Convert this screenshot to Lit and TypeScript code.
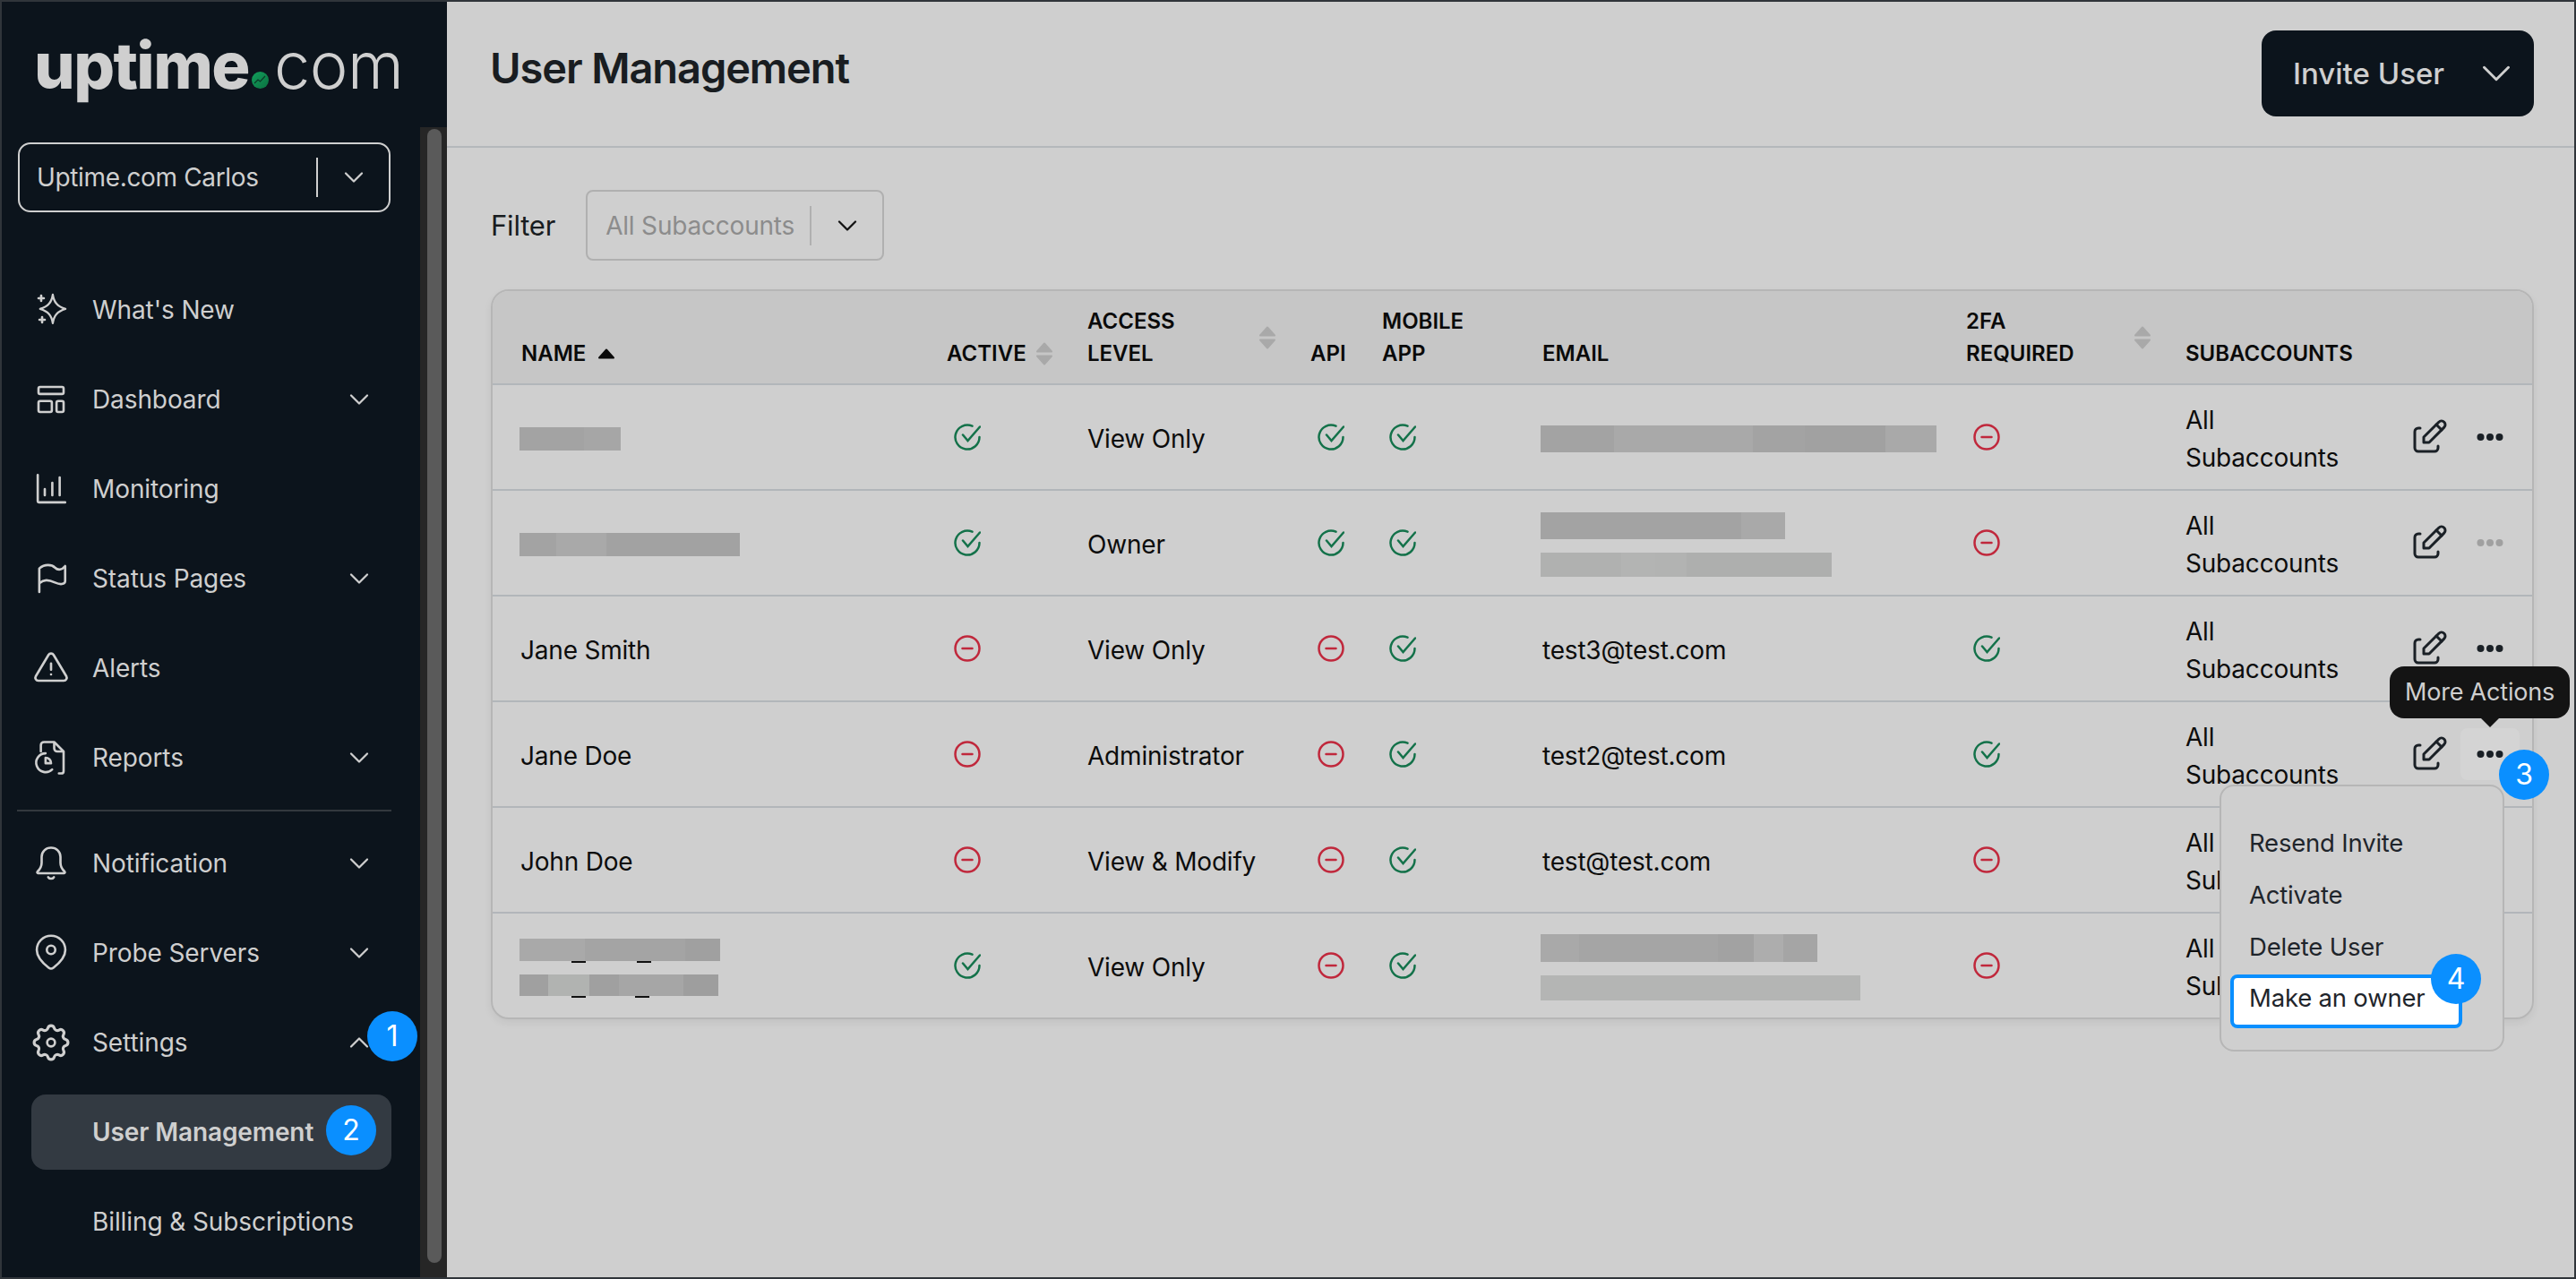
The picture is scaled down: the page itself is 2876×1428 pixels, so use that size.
// app.ts - Uptime.com user management screen with a step-by-step overlay
import { LitElement, html, css, svg } from 'lit';
import { customElement } from 'lit/decorators.js';

type Seg = [number, string];

interface Blur {
  height: number;
  segs: Seg[];
  ticks?: number[];
}

type Cell = string | Blur[];

interface UserRow {
  name: Cell;
  active: boolean;
  access: string;
  api: boolean;
  mobile: boolean;
  email: Cell;
  tfa: boolean;
  ownerLocked?: boolean;
}

const ICONS = {
  sparkle: svg`<path d="M13.3 .8c.9 5.600 3.200 8.600 9.300 10.500c-6.100 1.900-8.400 4.900-9.300 10.500c-.9-5.600-3.200-8.600-9.300-10.500c6.100-1.900 8.400-4.900 9.300-10.500z" transform="translate(1.530 1.570) scale(.87)"/><path d="M5.700 2.900v3.400M4 4.600h3.400M6.300 16.600v3.400M4.600 18.300h3.400"/>`,
  dashboard: svg`<rect x="4" y="4" width="16" height="4.500" rx="1"/><rect x="4" y="13" width="8.500" height="7" rx="1"/><rect x="15.500" y="13" width="4.500" height="7" rx="1"/>`,
  chart: svg`<path d="M3.500 3v16.500a1 1 0 0 0 1 1h16.500"/><path d="M8 12v4M12.800 8v8M17.500 4.600v11.400"/>`,
  flag: svg`<path d="M4.500 20.500V5.500c3.500-3 8-2.500 10-.5s4.500 1.500 6.500-1v9.500c0 1.500-2 3-6.500 1s-7-2-10 .5"/>`,
  alert: svg`<path d="M12 9v4"/><path d="M10.363 3.591l-8.106 13.534a1.914 1.914 0 0 0 1.636 2.871h16.214a1.914 1.914 0 0 0 1.636 -2.870l-8.106 -13.536a1.914 1.914 0 0 0 -3.274 0z"/><path d="M12 16h.01"/>`,
  report: svg`<path d="M5.500 8V4a2 2 0 0 1 2-2h6.500l6 6v12.500a1.500 1.500 0 0 1-1.500 1.500h-1.500"/><path d="M14 2.500v3.500a2 2 0 0 0 2 2h3.500"/><path d="M8.500 9.200a6 6 0 1 0 4.200 10.300"/><path d="M8.500 12v3.500h3.500a3.500 3.500 0 0 0-3.500-3.500z"/>`,
  bell: svg`<path d="M12 2a5.800 5.800 0 0 0-6 5.800v3.700c0 2.200-.9 4-2.700 5.800a.6.6 0 0 0 .4 1h16.600a.6.6 0 0 0 .4-1c-1.800-1.800-2.700-3.600-2.700-5.800V7.800a5.800 5.800 0 0 0-6-5.800z"/><path d="M10.200 20.800a2.200 2.200 0 0 0 3.600 0"/>`,
  pin: svg`<circle cx="12" cy="10" r="2.700"/><path d="M12 1a9.100 9.100 0 0 0-9.100 9.100c0 4.500 4 8.500 7.600 11.300a2.400 2.400 0 0 0 3 0c3.600-2.800 7.600-6.800 7.600-11.300a9.100 9.100 0 0 0-9.100-9.100z"/>`,
  gear: svg`<path d="M10.325 4.317c.426 -1.756 2.924 -1.756 3.350 0a1.724 1.724 0 0 0 2.573 1.066c1.543 -.94 3.310 .826 2.370 2.370a1.724 1.724 0 0 0 1.065 2.572c1.756 .426 1.756 2.924 0 3.350a1.724 1.724 0 0 0 -1.066 2.573c.94 1.543 -.826 3.310 -2.370 2.370a1.724 1.724 0 0 0 -2.572 1.065c-.426 1.756 -2.924 1.756 -3.350 0a1.724 1.724 0 0 0 -2.573 -1.066c-1.543 .94 -3.310 -.826 -2.370 -2.370a1.724 1.724 0 0 0 -1.065 -2.572c-1.756 -.426 -1.756 -2.924 0 -3.350a1.724 1.724 0 0 0 1.066 -2.573c-.94 -1.543 .826 -3.310 2.370 -2.370c1 .608 2.296 .07 2.572 -1.065z" transform="translate(-2.400 -2.400) scale(1.200)"/><circle cx="12" cy="12" r="2.500"/>`,
  edit: svg`<path d="M7 7h-1a2 2 0 0 0 -2 2v9a2 2 0 0 0 2 2h9a2 2 0 0 0 2 -2v-1"/><path d="M20.385 6.585a2.100 2.100 0 0 0 -2.970 -2.970l-8.415 8.385v3h3l8.385 -8.415z"/><path d="M16 5l3 3"/>`,
};

const icon = (body: unknown, size = 42, stroke = 1.5) => html`<svg
  class="icon"
  width=${size}
  height=${size}
  viewBox="0 0 24 24"
  fill="none"
  stroke="currentColor"
  stroke-width=${stroke}
  stroke-linecap="round"
  stroke-linejoin="round"
>${body}</svg>`;

const chevron = (up = false, size = 36, stroke = 1.5) =>
  icon(svg`<path d=${up ? 'M6 15l6-6 6 6' : 'M6 9l6 6 6-6'}/>`, size, stroke);

const yes = html`<svg class="state yes" width="30" height="30" viewBox="0 0 30 30" fill="none">
  <path d="M20.500 2.700A13.500 13.500 0 1 0 28.500 15"/>
  <path d="M10 12.500l5.500 6.500L29 3.500"/>
</svg>`;

const no = html`<svg class="state no" width="30" height="30" viewBox="0 0 30 30" fill="none">
  <circle cx="15" cy="15" r="13.500"/>
  <path d="M9.500 15h11"/>
</svg>`;

const flag = (on: boolean) => (on ? yes : no);

const sortBoth = html`<svg class="sort" width="20" height="26" viewBox="0 0 20 26">
  <path d="M10 1.500L18 10.500H2z"/>
  <path d="M2 15.500H18L10 24.500z"/>
</svg>`;

const sortUp = html`<svg class="sort-up" width="20" height="12" viewBox="0 0 20 12">
  <path d="M10 1.500L18 10.500H2z"/>
</svg>`;

const dots = html`<svg width="30" height="10" viewBox="0 0 30 10" fill="currentColor">
  <circle cx="4.500" cy="5" r="4"/>
  <circle cx="15" cy="5" r="4"/>
  <circle cx="25.500" cy="5" r="4"/>
</svg>`;

const COLS = [475, 157, 249, 80, 179, 473, 245, 242, 177];

const A = '#a3a3a3';
const B = '#a9a9a9';
const C = '#b2b3b2';

const USERS: UserRow[] = [
  {
    name: [{ height: 26, segs: [[72, A], [41, '#a6a6a6']] }],
    active: true,
    access: 'View Only',
    api: true,
    mobile: true,
    email: [{ height: 30, segs: [[82, A], [155, B], [58, A], [90, '#a1a1a1'], [57, B]] }],
    tfa: false,
  },
  {
    name: [{ height: 26, segs: [[41, A], [56, B], [149, '#a2a2a2']] }],
    active: true,
    access: 'Owner',
    api: true,
    mobile: true,
    email: [
      { height: 30, segs: [[224, A], [49, B]] },
      { height: 27, segs: [[90, '#b0b1b0'], [38, '#b3b4b3'], [35, C], [162, '#aeafae']] },
    ],
    tfa: false,
    ownerLocked: true,
  },
  { name: 'Jane Smith', active: false, access: 'View Only', api: false, mobile: true, email: 'test3@test.com', tfa: true },
  { name: 'Jane Doe', active: false, access: 'Administrator', api: false, mobile: true, email: 'test2@test.com', tfa: true },
  { name: 'John Doe', active: false, access: 'View & Modify', api: false, mobile: true, email: 'test@test.com', tfa: false },
  {
    name: [
      { height: 25, segs: [[73, B], [112, '#a4a4a4'], [39, '#a0a0a0']], ticks: [58, 131] },
      { height: 24, segs: [[32, '#a0a0a0'], [46, '#b1b3b1'], [33, '#a0a0a0'], [72, '#a6a6a6'], [39, '#9e9e9e']], ticks: [58, 129] },
    ],
    active: true,
    access: 'View Only',
    api: false,
    mobile: true,
    email: [
      { height: 31, segs: [[43, B], [155, '#a5a5a5'], [40, '#a2a2a2'], [33, '#adadad'], [38, '#a5a5a5']] },
      { height: 28, segs: [[357, '#b4b5b4']] },
    ],
    tfa: false,
  },
];

const NAV_TOP = [
  { label: "What's New", icon: ICONS.sparkle },
  { label: 'Dashboard', icon: ICONS.dashboard, more: true },
  { label: 'Monitoring', icon: ICONS.chart },
  { label: 'Status Pages', icon: ICONS.flag, more: true },
  { label: 'Alerts', icon: ICONS.alert },
  { label: 'Reports', icon: ICONS.report, more: true },
];

const NAV_BOTTOM = [
  { label: 'Notification', icon: ICONS.bell, more: true },
  { label: 'Probe Servers', icon: ICONS.pin, more: true },
];

@customElement('app-root')
export class AppRoot extends LitElement {
  static override styles = css`
    :host {
      display: block;
      width: 2876px;
      height: 1428px;
      box-sizing: border-box;
      border: 2px solid #30353a;
      overflow: hidden;
      font-family: Inter, 'Noto Sans', sans-serif;
      font-size: 28px;
      letter-spacing: -0.2px;
      color: #0c0c0c;
      background: #cfcfcf;
    }

    .app {
      display: flex;
      height: 100%;
    }

    .icon {
      display: block;
      flex: none;
    }

    /* sidebar */
    .sidebar {
      flex: none;
      width: 497px;
      display: flex;
      flex-direction: column;
      background: #0c141c;
      color: #cfcfcf;
    }

    .logo {
      flex: none;
      height: 140px;
      box-sizing: border-box;
      padding: 30px 0 0 36px;
      display: flex;
      align-items: baseline;
      font-size: 72px;
      line-height: 82px;
    }

    .logo b {
      font-weight: 800;
      letter-spacing: -1.6px;
    }

    .logo span {
      font-weight: 300;
      letter-spacing: -.5px;
    }

    .logo svg {
      margin: 0 6px 0 3px;
    }

    .side-body {
      flex: 1;
      min-height: 0;
      display: flex;
    }

    .side-scroll {
      flex: 1;
      min-width: 0;
      overflow: hidden;
      padding-top: 17px;
    }

    .track {
      flex: none;
      width: 30px;
      box-sizing: border-box;
      padding: 2px 6px 16px 8px;
      background: #262626;
    }

    .thumb {
      height: 100%;
      border-radius: 8px;
      background: #5a5a5a;
    }

    .select {
      display: flex;
      align-items: center;
      box-sizing: border-box;
      border-radius: 14px;
      padding: 0 21px 0 20px;
      border: 2px solid currentColor;
    }

    .select .value {
      flex: 1;
      white-space: nowrap;
    }

    .select .sep {
      width: 2px;
      height: 44px;
      margin-right: 22px;
      background: currentColor;
    }

    .account {
      width: 416px;
      height: 78px;
      margin-left: 18px;
      padding-left: 19px;
      letter-spacing: -0.35px;
    }

    nav {
      margin: 67px 0 0 33px;
      width: 402px;
      letter-spacing: -0.1px;
    }

    .nav-item {
      position: relative;
      height: 84px;
      margin-bottom: 16px;
      padding: 0 18px 0 1px;
      display: flex;
      align-items: center;
      white-space: nowrap;
    }

    .nav-item .label {
      flex: 1;
      margin-left: 25px;
    }

    .nav-item.sub {
      padding-left: 68px;
      border-radius: 16px;
    }

    .nav-item.sub .label {
      margin-left: 0;
    }

    .nav-item.current {
      background: #333a42;
      font-weight: 600;
    }

    nav hr {
      height: 2px;
      margin: 0 0 16px -16px;
      border: 0;
      background: #33383e;
    }

    .step {
      position: absolute;
      z-index: 5;
      width: 56px;
      height: 56px;
      border-radius: 50%;
      display: flex;
      align-items: center;
      justify-content: center;
      background: #0a8fff;
      color: #fff;
      font-size: 32px;
      font-weight: 400;
      line-height: 1;
    }

    .step.s1 {
      top: 7px;
      right: -29px;
    }

    .step.s2 {
      top: 12px;
      left: 329px;
    }

    .step.s3 {
      top: 24px;
      left: 43px;
    }

    .step.s4 {
      top: -27px;
      right: -25px;
    }

    /* main */
    main {
      flex: 1;
      min-width: 0;
    }

    .page-head {
      height: 163px;
      box-sizing: border-box;
      padding: 32px 45px 0 48px;
      display: flex;
      justify-content: space-between;
      align-items: flex-start;
      border-bottom: 2px solid #b4b8bb;
    }

    h1 {
      margin: 12px 0 0;
      font-size: 47px;
      line-height: 60px;
      font-weight: 600;
      letter-spacing: -1.1px;
      color: #191d21;
    }

    .invite {
      width: 304px;
      height: 96px;
      padding: 0 15px 0 35px;
      box-sizing: border-box;
      border: 0;
      border-radius: 16px;
      display: flex;
      align-items: center;
      justify-content: space-between;
      background: #0c141c;
      color: #cfcfcf;
      font: 500 33px Inter, sans-serif;
    }

    .content {
      padding: 47px 45px 0 49px;
    }

    .filter {
      display: flex;
      align-items: center;
      gap: 34px;
      margin-bottom: 32px;
      color: #181c20;
    }

    .filter-label {
      font-size: 31px;
    }

    .filter .select {
      width: 333px;
      height: 79px;
      border-radius: 8px;
      border-color: #b0b0b0;
      color: #111;
    }

    .filter .value {
      color: #8c8c8c;
    }

    .filter .sep {
      background: #b0b0b0;
    }

    /* table */
    .table-wrap {
      border: 2px solid #b6b6b6;
      border-radius: 20px;
      box-shadow: 0 4px 10px rgba(0, 0, 0, 0.06);
    }

    table {
      width: 2277px;
      table-layout: fixed;
      border-collapse: separate;
      border-spacing: 0;
    }

    th {
      box-sizing: border-box;
      height: 105px;
      padding: 0 6px 15px 32px;
      vertical-align: bottom;
      text-align: left;
      font-size: 24px;
      line-height: 36px;
      font-weight: 600;
      letter-spacing: 0;
      color: #0a0a0a;
      background: #c6c6c6;
      border-bottom: 2px solid #b2b6ba;
    }

    th:first-child {
      border-top-left-radius: 18px;
    }

    th:last-child {
      border-top-right-radius: 18px;
    }

    .th-in {
      display: flex;
      align-items: center;
      justify-content: space-between;
    }

    .th-name {
      justify-content: flex-start;
      gap: 13px;
    }

    .sort path {
      fill: #a9a9a9;
      stroke: #a9a9a9;
      stroke-width: 2;
      stroke-linejoin: round;
    }

    .sort-up path {
      fill: #0a0a0a;
      stroke: #0a0a0a;
      stroke-width: 2;
      stroke-linejoin: round;
    }

    td {
      box-sizing: border-box;
      height: 118px;
      padding: 3px 6px 0 32px;
      line-height: 42px;
      border-bottom: 2px solid #b2b6ba;
    }

    td:first-child {
      padding-left: 31px;
    }

    tr:last-child td {
      height: 116px;
      border-bottom: 0;
    }

    .state {
      display: block;
      margin: -3px 0 0 8px;
      stroke-width: 2.500;
      stroke-linecap: round;
    }

    .state.yes {
      stroke: #14724a;
    }

    .state.no {
      stroke: #c0283c;
    }

    .blurs {
      display: flex;
      flex-direction: column;
      gap: 15px;
      margin-left: -1px;
    }

    td:not(:first-child) .blurs {
      margin-left: -2px;
    }

    .blur {
      position: relative;
      display: flex;
      align-self: flex-start;
    }

    .tick {
      position: absolute;
      bottom: -2px;
      width: 16px;
      height: 2px;
      background: #111;
    }

    td.actions {
      padding: 0 14px 0 0;
    }

    .actions-in {
      display: flex;
      justify-content: flex-end;
      gap: 2px;
    }

    .act {
      position: relative;
      width: 66px;
      height: 58px;
      display: flex;
      align-items: center;
      justify-content: center;
      border-radius: 8px;
      color: #1a2026;
    }

    .act.faded {
      color: #a0a0a0;
    }

    .act.hover {
      background: #d4d4d4;
    }

    .tooltip {
      position: absolute;
      z-index: 4;
      top: -69px;
      left: -79px;
      width: 201px;
      height: 58px;
      display: flex;
      align-items: center;
      justify-content: center;
      border-radius: 16px;
      background: #141414;
      color: #cfcfcf;
      font-size: 27px;
      white-space: nowrap;
    }

    .tooltip::after {
      content: '';
      position: absolute;
      top: 100%;
      left: 102px;
      border: 10px solid transparent;
      border-top-color: #141414;
      border-bottom: 0;
    }

    .menu {
      position: absolute;
      z-index: 3;
      top: 63px;
      right: 17px;
      width: 318px;
      height: 298px;
      box-sizing: border-box;
      padding-top: 34px;
      border: 2px solid #b6b6b6;
      border-radius: 16px;
      background: #cfcfcf;
      color: #1f252b;
      font-size: 27.5px;
      line-height: 58px;
    }

    .menu-item {
      height: 58px;
      padding-left: 31px;
      white-space: nowrap;
    }

    .menu-item.focus {
      position: relative;
      box-sizing: border-box;
      width: 259px;
      height: 60px;
      margin: 2px 0 0 10px;
      padding-left: 17px;
      line-height: 44px;
      border: 4px solid #0a8fff;
      border-radius: 8px;
      background: #fff;
    }
  `;

  private renderCell(cell: Cell) {
    if (typeof cell === 'string') return cell;
    return html`<div class="blurs">
      ${cell.map(
        (b) => html`<div class="blur" style="height:${b.height}px">
          ${b.segs.map(([w, c]) => html`<i style="width:${w}px;background:${c}"></i>`)}
          ${(b.ticks ?? []).map((x) => html`<i class="tick" style="left:${x}px"></i>`)}
        </div>`
      )}
    </div>`;
  }

  private renderMenu() {
    return html`
      <div class="tooltip">More Actions</div>
      <div class="step s3">3</div>
      <div class="menu">
        <div class="menu-item">Resend Invite</div>
        <div class="menu-item">Activate</div>
        <div class="menu-item">Delete User</div>
        <div class="menu-item focus">Make an owner<div class="step s4">4</div></div>
      </div>
    `;
  }

  private renderRow(u: UserRow, i: number) {
    const open = i === 3;
    return html`<tr>
      <td>${this.renderCell(u.name)}</td>
      <td>${flag(u.active)}</td>
      <td>${u.access}</td>
      <td>${flag(u.api)}</td>
      <td>${flag(u.mobile)}</td>
      <td>${this.renderCell(u.email)}</td>
      <td>${flag(u.tfa)}</td>
      <td>All<br />Subaccounts</td>
      <td class="actions">
        <div class="actions-in">
          <div class="act">${icon(ICONS.edit, 48, 1.5)}</div>
          <div class="act ${u.ownerLocked ? 'faded' : ''} ${open ? 'hover' : ''}">
            ${dots} ${open ? this.renderMenu() : ''}
          </div>
        </div>
      </td>
    </tr>`;
  }

  private renderNav(item: { label: string; icon: unknown; more?: boolean }) {
    return html`<div class="nav-item">
      ${icon(item.icon)}
      <span class="label">${item.label}</span>
      ${item.more ? chevron() : ''}
    </div>`;
  }

  override render() {
    return html`<div class="app">
      <aside class="sidebar">
        <div class="logo">
          <b>uptime</b>
          <svg width="19" height="19" viewBox="0 0 19 19">
            <defs>
              <linearGradient id="dot" x1="0" y1="0" x2="1" y2="1">
                <stop offset="0" stop-color="#12a05c" />
                <stop offset="1" stop-color="#0b7040" />
              </linearGradient>
            </defs>
            <circle cx="9.500" cy="9.500" r="9.500" fill="url(#dot)" />
            <path d="M3 13l4-4 2.500 2L15 5" fill="none" stroke="#0c3a28" stroke-width="1.200" />
          </svg>
          <span>com</span>
        </div>
        <div class="side-body">
          <div class="side-scroll">
            <div class="select account">
              <span class="value">Uptime.com Carlos</span>
              <span class="sep"></span>
              ${chevron()}
            </div>
            <nav>
              ${NAV_TOP.map((n) => this.renderNav(n))}
              <hr />
              ${NAV_BOTTOM.map((n) => this.renderNav(n))}
              <div class="nav-item">
                ${icon(ICONS.gear)}
                <span class="label">Settings</span>
                ${chevron(true)}
                <div class="step s1">1</div>
              </div>
              <div class="nav-item sub current">
                <span class="label">User Management</span>
                <div class="step s2">2</div>
              </div>
              <div class="nav-item sub"><span class="label">Billing &amp; Subscriptions</span></div>
            </nav>
          </div>
          <div class="track"><div class="thumb"></div></div>
        </div>
      </aside>

      <main>
        <header class="page-head">
          <h1>User Management</h1>
          <button class="invite">Invite User ${chevron(false, 54, 1.3)}</button>
        </header>
        <div class="content">
          <div class="filter">
            <span class="filter-label">Filter</span>
            <div class="select">
              <span class="value">All Subaccounts</span>
              <span class="sep"></span>
              ${chevron()}
            </div>
          </div>
          <div class="table-wrap">
            <table>
              <colgroup>${COLS.map((w) => html`<col style="width:${w}px" />`)}</colgroup>
              <thead>
                <tr>
                  <th><div class="th-in th-name">NAME ${sortUp}</div></th>
                  <th><div class="th-in">ACTIVE ${sortBoth}</div></th>
                  <th><div class="th-in"><span>ACCESS<br />LEVEL</span>${sortBoth}</div></th>
                  <th>API</th>
                  <th>MOBILE<br />APP</th>
                  <th>EMAIL</th>
                  <th><div class="th-in"><span>2FA<br />REQUIRED</span>${sortBoth}</div></th>
                  <th>SUBACCOUNTS</th>
                  <th></th>
                </tr>
              </thead>
              <tbody>${USERS.map((u, i) => this.renderRow(u, i))}</tbody>
            </table>
          </div>
        </div>
      </main>
    </div>`;
  }
}

declare global {
  interface HTMLElementTagNameMap {
    'app-root': AppRoot;
  }
}
